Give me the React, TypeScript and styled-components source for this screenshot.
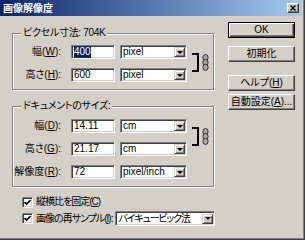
import React from 'react';
import styled, { createGlobalStyle } from 'styled-components';

const GlobalStyle = createGlobalStyle`
  html, body {
    margin: 0;
    padding: 0;
    background: #d4d0c8;
  }
  body {
    font-family: "Liberation Sans", "Noto Sans CJK JP", sans-serif;
    font-size: 10px;
    font-feature-settings: "palt";
    color: #000;
  }
`;

const Window = styled.div`
  width: 305px;
  height: 240px;
  box-sizing: border-box;
  background: #d4d0c8;
  padding: 0 3px 3px 0;
  box-shadow: inset -1px -1px 0 #404040, inset -2px -2px 0 #808080;
  display: flex;
  flex-direction: column;
  overflow: hidden;
`;

const TitleBar = styled.div`
  height: 16px;
  display: flex;
  align-items: center;
  justify-content: space-between;
  padding: 0 3px;
  background: linear-gradient(to right, #0a246a, #a6caf0);
`;

const Title = styled.span`
  color: #fff;
  font-family: "Noto Sans CJK JP", sans-serif;
  font-weight: bold;
  font-size: 10px;
  line-height: 12px;
`;

const CloseButton = styled.div`
  width: 12px;
  height: 10px;
  box-sizing: border-box;
  background: #d4d0c8;
  border: 1px solid;
  border-color: #fff #404040 #404040 #fff;
  box-shadow: inset -1px -1px 0 #808080;
  display: flex;
  align-items: center;
  justify-content: center;
`;

const Body = styled.div`
  display: flex;
  align-items: flex-start;
  padding-left: 12px;
`;

const LeftColumn = styled.div`
  width: 203px;
  margin-top: 11px;
  display: flex;
  flex-direction: column;
`;

const GroupBox = styled.fieldset<{ $mt?: number; $pt: number }>`
  margin: ${p => p.$mt ?? 0}px 1px 0 0;
  padding: ${p => p.$pt}px 0 7px 0;
  min-width: 0;
  border: 1px solid #808080;
  box-shadow: 1px 1px 0 #fff, inset 1px 1px 0 #fff;
`;

const Legend = styled.legend`
  margin-left: 8px;
  padding: 0 2px;
  height: 12px;
  line-height: 12px;
  letter-spacing: -0.3px;
  background: #d4d0c8;
`;

const FieldGrid = styled.div`
  display: grid;
  grid-template-columns: 53px 44px 67px 1fr;
  grid-auto-rows: 14px;
  column-gap: 5px;
  row-gap: 9px;
  align-items: center;
`;

const FieldLabel = styled.span`
  grid-column: 1;
  text-align: right;
  padding-right: 5px;
  white-space: nowrap;
  line-height: 12px;
`;

const Key = styled.span`
  text-decoration: underline;
`;

const Field = styled.div<{ $w?: number; $h?: number }>`
  ${p => (p.$w ? `width: ${p.$w}px;` : '')}
  height: ${p => p.$h ?? 14}px;
  box-sizing: border-box;
  background: #fff;
  border: 1px solid;
  border-color: #808080 #fff #fff #808080;
  box-shadow: inset 1px 1px 0 #404040, inset -1px -1px 0 #d4d0c8;
  display: flex;
  align-items: center;
  padding: 0 1px 0 2px;
  line-height: 12px;
  white-space: nowrap;
  overflow: hidden;
`;

const FieldText = styled.span<{ $tight?: boolean }>`
  flex: 1;
  min-width: 0;
  overflow: hidden;
  ${p => (p.$tight ? 'letter-spacing: -1.2px;' : '')}
`;

const Selected = styled.span`
  background: #0a246a;
  color: #fff;
`;

const ArrowButton = styled.div`
  width: 11px;
  height: 10px;
  flex-shrink: 0;
  box-sizing: border-box;
  background: #d4d0c8;
  border: 1px solid;
  border-color: #d4d0c8 #404040 #404040 #d4d0c8;
  box-shadow: inset 1px 1px 0 #fff, inset -1px -1px 0 #808080;
  display: flex;
  align-items: center;
  justify-content: center;

  &::after {
    content: '';
    border-left: 3px solid transparent;
    border-right: 3px solid transparent;
    border-top: 3px solid #000;
  }
`;

const LinkCell = styled.div`
  grid-column: 4;
  grid-row: 1 / 3;
  align-self: stretch;
  display: flex;
  align-items: center;
  padding: 8px 0 10px;
`;

const Bracket = styled.div`
  width: 5px;
  align-self: stretch;
  border: 2px solid #000;
  border-left: none;
`;

const ChainIcon = styled.svg`
  margin-left: 3px;
`;

const OptionRow = styled.div<{ $mt: number; $h: number }>`
  display: flex;
  align-items: center;
  gap: 3px;
  height: ${p => p.$h}px;
  margin-top: ${p => p.$mt}px;
  padding: 0 2px 0 10px;
  white-space: nowrap;
  line-height: 12px;
`;

const OptionText = styled.span`
  letter-spacing: -1px;
`;

const CheckBox = styled.div`
  width: 11px;
  height: 11px;
  flex-shrink: 0;
  box-sizing: border-box;
  background: #fff;
  border: 1px solid;
  border-color: #808080 #fff #fff #808080;
  box-shadow: inset 1px 1px 0 #404040, inset -1px -1px 0 #d4d0c8;
  display: flex;
  align-items: center;
  justify-content: center;
`;

const ResampleSelect = styled(Field)`
  margin-left: auto;
  flex-shrink: 0;
`;

const ButtonColumn = styled.div`
  width: 67px;
  margin-left: 13px;
  display: flex;
  flex-direction: column;
`;

const Button = styled.div<{ $mt: number; $default?: boolean }>`
  height: 16px;
  margin-top: ${p => p.$mt}px;
  box-sizing: border-box;
  background: #d4d0c8;
  border: 1px solid;
  border-color: ${p => (p.$default ? '#000' : '#fff #404040 #404040 #fff')};
  box-shadow: ${p =>
    p.$default
      ? 'inset 1px 1px 0 #fff, inset -1px -1px 0 #404040, inset -2px -2px 0 #808080'
      : 'inset -1px -1px 0 #808080'};
  display: flex;
  align-items: center;
  justify-content: center;
  line-height: 12px;
  white-space: nowrap;
`;

const Chain = () => (
  <ChainIcon width="7" height="17" viewBox="0 0 7 17">
    <ellipse cx="3.5" cy="3.6" rx="2.6" ry="3.1" fill="#a8a8a8" stroke="#303030" strokeWidth="1" />
    <ellipse cx="3.5" cy="8.5" rx="2.6" ry="3.1" fill="#a8a8a8" stroke="#303030" strokeWidth="1" />
    <ellipse cx="3.5" cy="13.4" rx="2.6" ry="3.1" fill="#a8a8a8" stroke="#303030" strokeWidth="1" />
  </ChainIcon>
);

const Select = ({ value, w = 67, h }: { value: string; w?: number; h?: number }) => (
  <Field $w={w} $h={h}>
    <FieldText>{value}</FieldText>
    <ArrowButton />
  </Field>
);

const Check = () => (
  <CheckBox>
    <svg width="7" height="7" viewBox="0 0 7 7">
      <path d="M0.5 3 L2.5 5 L6.5 1" fill="none" stroke="#000" strokeWidth="1.6" />
    </svg>
  </CheckBox>
);

export default function App() {
  return (
    <>
      <GlobalStyle />
      <Window>
        <TitleBar>
          <Title>画像解像度</Title>
          <CloseButton>
            <svg width="6" height="6" viewBox="0 0 6 6">
              <path d="M0.5 0.5 L5.5 5.5 M5.5 0.5 L0.5 5.5" stroke="#000" strokeWidth="1.5" />
            </svg>
          </CloseButton>
        </TitleBar>
        <Body>
          <LeftColumn>
            <GroupBox $pt={6}>
              <Legend>ピクセル寸法: 704K</Legend>
              <FieldGrid>
                <FieldLabel>幅(<Key>W</Key>):</FieldLabel>
                <Field><Selected>400</Selected></Field>
                <Select value="pixel" />
                <LinkCell>
                  <Bracket />
                  <Chain />
                </LinkCell>
                <FieldLabel>高さ(<Key>H</Key>):</FieldLabel>
                <Field>600</Field>
                <Select value="pixel" />
              </FieldGrid>
            </GroupBox>
            <GroupBox $mt={10} $pt={7}>
              <Legend>ドキュメントのサイズ:</Legend>
              <FieldGrid>
                <FieldLabel>幅(<Key>D</Key>):</FieldLabel>
                <Field>14.11</Field>
                <Select value="cm" />
                <LinkCell>
                  <Bracket />
                  <Chain />
                </LinkCell>
                <FieldLabel>高さ(<Key>G</Key>):</FieldLabel>
                <Field>21.17</Field>
                <Select value="cm" />
                <FieldLabel>解像度(<Key>R</Key>):</FieldLabel>
                <Field>72</Field>
                <Select value="pixel/inch" />
              </FieldGrid>
            </GroupBox>
            <OptionRow $mt={8} $h={14}>
              <Check />
              <OptionText>縦横比を固定(<Key>C</Key>)</OptionText>
            </OptionRow>
            <OptionRow $mt={2} $h={15}>
              <Check />
              <OptionText>画像の再サンプル(<Key>I</Key>):</OptionText>
              <ResampleSelect $w={100} $h={15}>
                <FieldText $tight>バイキュービック法</FieldText>
                <ArrowButton />
              </ResampleSelect>
            </OptionRow>
          </LeftColumn>
          <ButtonColumn>
            <Button $mt={6} $default>OK</Button>
            <Button $mt={8}>初期化</Button>
            <Button $mt={13}>ヘルプ(<Key>H</Key>)</Button>
            <Button $mt={3}>自動設定(<Key>A</Key>)...</Button>
          </ButtonColumn>
        </Body>
      </Window>
    </>
  );
}
